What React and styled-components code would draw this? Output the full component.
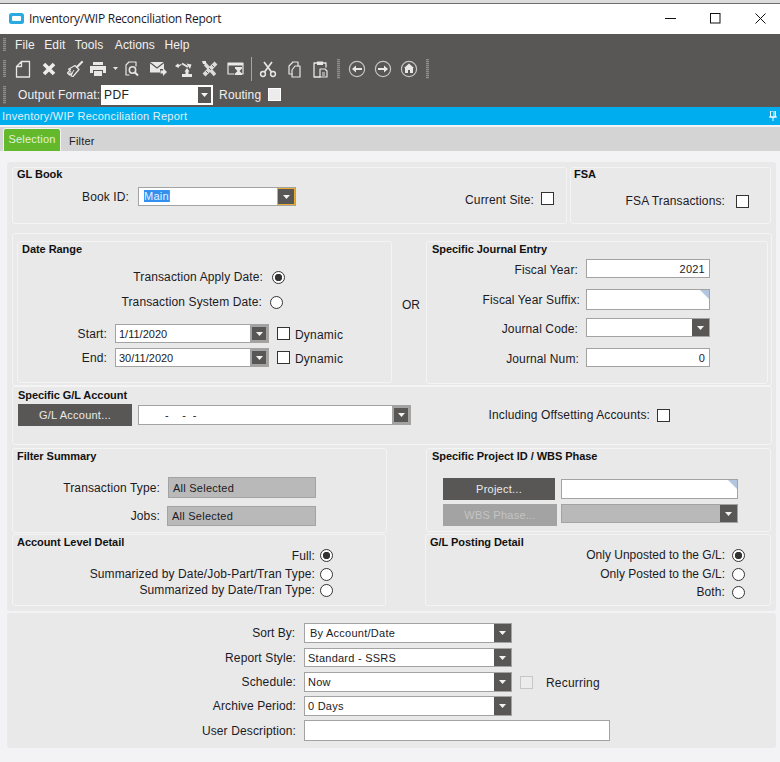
import React from "react";
import styled, { createGlobalStyle } from "styled-components";

const Global = createGlobalStyle`
  html, body { margin: 0; padding: 0; background: #f3f3f5; }
  body { font-family: "Liberation Sans", Arial, sans-serif; font-size: 12px; color: #1c1a24; overflow: hidden; }
  #root { width: 780px; height: 762px; overflow: hidden; }
  * { box-sizing: border-box; }
`;

const Page = styled.div`display: flex; flex-direction: column; width: 780px; height: 762px; background: #f3f3f5;`;

const TitleBar = styled.header`
  height: 34px; display: flex; align-items: center; background: #fff;
  border-top: 3px solid #dcdcdc; box-shadow: inset 0 1px 0 #6e6e6e; padding: 1px 0 1px 9px;
`;
const TitleText = styled.span`
  margin-left: 5px; font: 12px "Open Sans", sans-serif; letter-spacing: -0.26px; color: #1a1a28; flex: 1;
`;
const WinButtons = styled.div`display: flex; align-items: center; gap: 34px; padding-right: 14px;`;

const DarkBar = styled.div`height: 73px; background: #595755; display: flex; flex-direction: column; color: #f0f0f0;`;
const BarRow = styled.div`height: ${p => p.$h}px; display: flex; align-items: center; padding-left: 3px;`;
const Grip = styled.div`
  width: 3px; height: ${p => p.$h || 16}px; flex: none;
  background: repeating-linear-gradient(to bottom, #8f8d8b 0 1px, #6a6866 1px 2px);
`;
const Menu = styled.nav`display: flex; margin-left: 9px; gap: 9.5px;`;
const MenuItem = styled.span`font-size: 12px; letter-spacing: 0.1px; color: #f2f2f2; margin-left: ${p => p.$ml || 0}px;`;
const Tool = styled.div`width: ${p => p.$w || 26}px; flex: none; display: flex; align-items: center; justify-content: center; margin-left: ${p => p.$ml || 0}px;`;
const ToolSep = styled.div`width: 1px; height: 24px; background: #a8a6a4; margin: 0 3px 0 2px; flex: none;`;
const ToolGrip = styled(Grip)`margin: 0 ${p => p.$mr || 0}px 0 ${p => p.$ml || 0}px;`;
const BarLabel = styled.span`color: #f0f0f0; font-size: 12px; margin-left: ${p => p.$ml}px; letter-spacing: 0.1px;`;
const OutCombo = styled.div`
  width: 112px; height: 20px; margin-left: 1px; background: #fff; color: #222; display: flex; align-items: center;
  justify-content: space-between; padding: 0 1px 0 3px; font-size: 12px; letter-spacing: 0.4px;
`;
const OutButton = styled.div`
  width: 15px; height: 18px; background: #595755; border: 1px solid #fff; display: flex; align-items: center; justify-content: center;
`;
const BarCheck = styled.div`width: 13px; height: 13px; margin-left: 7px; background: #ececec; border: 1px solid #fff;`;

const Caption = styled.div`
  height: 18px; background: #00aeef; color: #e6eef2; font-size: 11px; letter-spacing: 0.25px;
  display: flex; align-items: center; justify-content: space-between; padding: 0 3px 0 2px;
`;
const TabStrip = styled.div`
  height: 24px; margin-top: 2px; background: #d4d4d4; display: flex; align-items: flex-end; padding-left: 3px; margin-bottom: 11px;
`;
const ActiveTab = styled.div`
  width: 58px; height: 23px; background: #63b92b; border: 1px solid #f2f2f2; border-bottom: 0; border-radius: 3px 3px 0 0;
  color: #e4f3d8; font-size: 11px; text-align: center; line-height: 20px; letter-spacing: 0.2px;
`;
const Tab = styled.div`margin-left: 8px; font-size: 11px; color: #222; height: 20px; line-height: 20px; letter-spacing: 0.2px;`;

const Panel = styled.section`
  margin-left: 7px; width: 769px; height: ${p => p.$h}px; margin-top: ${p => p.$mt || 0}px;
  background: #e9e9e9; padding: ${p => p.$pt || 0}px 0 0 ${p => p.$pl || 0}px;
  border-radius: 3px; display: flex; flex-direction: column;
`;
const Between = styled.div`display: flex; margin-top: ${p => p.$mt || 0}px; width: ${p => p.$w || 760}px;`;
const Section = styled.div`
  width: ${p => p.$w}px; height: ${p => p.$h}px; flex: none;
  margin-left: ${p => p.$ml || 0}px; margin-top: ${p => p.$mt || 0}px;
  border: 1px solid #f4f4f4; border-radius: 3px;
`;
const Wrap = styled(Section)`display: flex; padding: 7px 0 0 4px; align-items: flex-start;`;
const Title = styled.div`
  font-weight: bold; font-size: 11px; line-height: 13px; color: #111; white-space: nowrap; letter-spacing: -0.05px;
  margin: ${p => p.$mt || 0}px 0 0 ${p => p.$x}px;
`;
const Row = styled.div`
  display: flex; align-items: ${p => p.$align || "center"}; height: ${p => p.$h}px;
  margin-top: ${p => p.$mt || 0}px; padding-left: ${p => p.$pl || 0}px;
`;
const Label = styled.span`
  width: ${p => p.$w}px; flex: none; text-align: right; margin-right: ${p => p.$gap ?? 8}px; white-space: nowrap;
  font-size: 12px; letter-spacing: ${p => p.$ls ?? 0.12}px; position: relative; top: ${p => p.$dy || 0}px;
`;
const Plain = styled.span`
  margin-left: ${p => p.$ml || 0}px; font-size: 12px; letter-spacing: 0.2px; white-space: nowrap; position: relative; top: 1px;
`;
const Or = styled.span`width: 34px; margin: 57px 0 0 0; padding-left: 10px; font-size: 12px; flex: none;`;
const Check = styled.div`
  width: 13px; height: 13px; flex: none; background: ${p => p.$dim ? "#ececec" : "#fff"};
  border: 1px solid ${p => p.$dim ? "#c6c6c6" : "#333"}; margin-left: ${p => p.$ml || 0}px;
  position: relative; top: ${p => p.$dy || 0}px;
`;
const Radio = styled.div`
  width: 13px; height: 13px; flex: none; border-radius: 50%; border: 1px solid #333;
  background: ${p => p.$on ? "radial-gradient(circle, #333 0 3.4px, #fff 4px)" : "#fff"};
`;
const Input = styled.div`
  width: ${p => p.$w}px; height: ${p => p.$h || 19}px; flex: none; background: ${p => p.$bg || "#fff"};
  border: 1px solid ${p => p.$bd || "#a3a3a3"}; font-size: 11px; letter-spacing: ${p => p.$ls ?? 0.25}px; color: #1c1a24;
  display: flex; align-items: center; justify-content: ${p => p.$right ? "flex-end" : "flex-start"};
  padding: 0 ${p => p.$right ? 4 : 0}px 0 ${p => p.$right ? 0 : (p.$pad ?? 4)}px; position: relative; overflow: hidden; white-space: pre;
`;
const Corner = styled.i`
  position: absolute; top: 0; right: 0; width: 0; height: 0;
  border-top: 9px solid #b2c6e0; border-left: 9px solid transparent;
`;
const Combo = styled(Input)`
  border-color: #a3a3a3; padding-right: 0; justify-content: space-between;
`;
const ComboText = styled.span`flex: 1; padding-left: ${p => p.$pad ?? 0}px;`;
const Drop = styled.div`
  width: ${p => p.$w || 17}px; align-self: stretch; flex: none; background: #595755; display: flex; align-items: center; justify-content: center;
  border: ${p => p.$thick ? "2px solid #a3a3a3" : p.$focus ? "1px solid #e5ad32" : "0"};
  border-right-width: ${p => p.$thick ? 2 : p.$focus ? 1 : 0}px;
`;
const Sel = styled.span`background: #3390ef; color: #e8f2ff; border-right: 1px solid #f07a10; line-height: 13px;`;
const DarkButton = styled.div`
  width: ${p => p.$w}px; height: 22px; flex: none; background: ${p => p.$off ? "#a3a3a3" : "#595755"};
  color: ${p => p.$off ? "#c4c4c4" : "#eaeaea"}; font-size: 11px; letter-spacing: 0.25px; display: flex; align-items: center; justify-content: center;
  margin-right: ${p => p.$mr}px;
`;

const Tri = ({ s = 7 }) => (
  <svg width={s} height={4} viewBox="0 0 7 4"><path d="M0 0h7L3.5 4z" fill="#f4f4f4" /></svg>
);

const C = { fill: "none", stroke: "#e6e6e6", strokeWidth: 1.5, strokeLinejoin: "round", strokeLinecap: "round" };
const Ico = ({ children, w = 18, h = 18 }) => (
  <svg width={w} height={h} viewBox={`0 0 ${w} ${h}`}>{children}</svg>
);

const icons = {
  file: <Ico><path {...C} d="M7.5 1.5H15.5V17H2.5V6.5z M7.5 1.5V6.5H2.5" strokeWidth="1.3" /></Ico>,
  x: <Ico><path d="M4 4l10 10M14 4L4 14" stroke="#ececec" strokeWidth="3.6" /></Ico>,
  broom: <Ico w={20}><path d="M12 7l5-5" stroke="#e6e6e6" strokeWidth="2.2" strokeLinecap="round" /><path {...C} strokeWidth="1.2" d="M10 5.5l4 4-6 7-2-.5 1-3-2.5 2-2-2 3-3.5-2-.3z" /><path stroke="#e6e6e6" strokeWidth="1" d="M6 11l-2 3M9 10l-2.5 4" /></Ico>,
  print: <Ico><path fill="#e8e8e8" d="M4 2h10v3H4zM1 6h16v7h-3v-3H4v3H1zM5 11h8v5H5z" /></Ico>,
  preview: <Ico w={16}><path {...C} strokeWidth="1.2" d="M6 2h7v4M3 5l3-3M3 5v10h3" /><circle cx="9.5" cy="10" r="3.2" {...C} strokeWidth="1.5" /><path stroke="#e8e8e8" strokeWidth="2" d="M12 12.5l3 3" /></Ico>,
  mail: <Ico><path fill="#e8e8e8" d="M1 2h14v7h-4v3.5H1z" /><path fill="none" stroke="#595755" strokeWidth="1.2" d="M1 2.5l7 5.5 7-5.5" /><path fill="#e8e8e8" d="M11.5 10.5h2.5V8l4 4-4 4v-2.5h-2.5z" /></Ico>,
  arrows: <Ico><path fill="#e8e8e8" d="M0 6l3-2.5 1 1.5 2-1 .5 1L4 6.5l-.5 1.5z" /><path stroke="#e8e8e8" strokeWidth="2" d="M7 3.5l6 3.5" /><path fill="#e8e8e8" d="M11.5 3.5l5 1-1.5 4.5z" /><path fill="#e8e8e8" d="M12 8l2.5 3.5H13.500V14H17V17H7V14H10.500V11.500H9.500z" /></Ico>,
  tools: <Ico><path stroke="#dcdcdc" strokeWidth="4" d="M3 15L15 3" /><path stroke="#dcdcdc" strokeWidth="3.4" d="M4 4l10 11" /><path stroke="#595755" strokeWidth=".9" d="M5 11l2 2M8 8l2 2M11 5l2 2" /><path fill="#e8e8e8" d="M1 1h4v3H2z" /></Ico>,
  hour: <Ico><path {...C} strokeWidth="1.2" d="M1 3h15v11h-4M1 3v11h6" /><path fill="#e8e8e8" d="M1 3h15v2.5H1zM8 7h7v1.5l-2.5 2.5 2.5 2.5V15H8v-1.5l2.5-2.5L8 8.5z" /></Ico>,
  cut: <Ico><circle cx="4" cy="14" r="2.4" {...C} /><circle cx="14" cy="14" r="2.4" {...C} /><path stroke="#e6e6e6" strokeWidth="1.7" d="M5.5 12L13 2M12.5 12L5 2" /></Ico>,
  copy: <Ico w={16}><path {...C} strokeWidth="1.2" d="M7 2h5v4M7 2L3 6v8h3" /><path {...C} strokeWidth="1.2" d="M9 6h5v11H6v-7z" /></Ico>,
  paste: <Ico w={16}><path {...C} strokeWidth="1.3" d="M5 3H2v14h6M11 3h3v4" /><path fill="#e6e6e6" d="M5 1.5h6V5H5z" /><path {...C} strokeWidth="1.2" d="M8 9h5l2 2v6H8z" /><path stroke="#e6e6e6" d="M10 13h3M10 15h3" /></Ico>,
  back: <Ico><circle cx="9" cy="9" r="7.6" {...C} stroke="#c4c4c4" strokeWidth="1.2" /><path fill="#e8e8e8" d="M4 9l4-3.6V8h6v2H8v2.6z" /></Ico>,
  fwd: <Ico><circle cx="9" cy="9" r="7.6" {...C} stroke="#c4c4c4" strokeWidth="1.2" /><path fill="#e8e8e8" d="M14 9l-4-3.6V8H4v2h6v2.6z" /></Ico>,
  home: <Ico><circle cx="9" cy="9" r="7.6" {...C} stroke="#c4c4c4" strokeWidth="1.2" /><path fill="#e8e8e8" d="M9 3.5l5 4.5h-1v5H10v-3H8v3H5V8H4z" /></Ico>,
};

const Tools = () => (
  <BarRow $h={27}>
    <Grip $h={17} />
    <Tool $ml={4}>{icons.file}</Tool>
    <Tool>{icons.x}</Tool>
    <Tool>{icons.broom}</Tool>
    <Tool $w={30}>
      {icons.print}
      <svg width="5" height="3" viewBox="0 0 5 3" style={{ marginLeft: 6 }}><path d="M0 0h5L2.5 3z" fill="#e8e8e8" /></svg>
    </Tool>
    <Tool>{icons.preview}</Tool>
    <Tool $ml={1}>{icons.mail}</Tool>
    <Tool>{icons.arrows}</Tool>
    <Tool>{icons.tools}</Tool>
    <Tool>{icons.hour}</Tool>
    <ToolSep />
    <Tool>{icons.cut}</Tool>
    <Tool>{icons.copy}</Tool>
    <Tool>{icons.paste}</Tool>
    <ToolGrip $h={20} $ml={4} $mr={4} />
    <Tool>{icons.back}</Tool>
    <Tool>{icons.fwd}</Tool>
    <Tool>{icons.home}</Tool>
    <ToolGrip $h={20} $ml={4} />
  </BarRow>
);

const Sel3 = ({ w, h, text, pad, thick, focus, dw, ls, children }) => (
  <Combo $w={w} $h={h} $pad={0} $ls={ls}>
    <ComboText $pad={pad}>{children || text}</ComboText>
    <Drop $thick={thick} $focus={focus} $w={dw}><Tri /></Drop>
  </Combo>
);

export default function App() {
  return (
    <Page>
      <Global />
      <TitleBar>
        <svg width="15" height="11" viewBox="0 0 15 11"><rect width="15" height="11" rx="2.5" fill="#29abe2" /><rect x="3" y="3" width="9" height="5" rx="1" fill="#fff" /></svg>
        <TitleText>Inventory/WIP Reconciliation Report</TitleText>
        <WinButtons>
          <svg width="11" height="11" viewBox="0 0 11 11"><path d="M0 5.5h11" stroke="#111" /></svg>
          <svg width="11" height="11" viewBox="0 0 11 11"><rect x=".5" y=".5" width="9.5" height="9.5" fill="none" stroke="#111" /></svg>
          <svg width="11" height="11" viewBox="0 0 11 11"><path d="M.5.5l10 10M10.5.5l-10 10" stroke="#111" /></svg>
        </WinButtons>
      </TitleBar>

      <DarkBar>
        <BarRow $h={21}>
          <Grip $h={13} />
          <Menu>
            <MenuItem>File</MenuItem>
            <MenuItem>Edit</MenuItem>
            <MenuItem>Tools</MenuItem>
            <MenuItem $ml={2}>Actions</MenuItem>
            <MenuItem>Help</MenuItem>
          </Menu>
        </BarRow>
        <Tools />
        <BarRow $h={25}>
          <Grip $h={18} />
          <BarLabel $ml={12}>Output Format:</BarLabel>
          <OutCombo>PDF<OutButton><Tri /></OutButton></OutCombo>
          <BarLabel $ml={6}>Routing</BarLabel>
          <BarCheck />
        </BarRow>
      </DarkBar>

      <Caption>
        Inventory/WIP Reconciliation Report
        <svg width="8" height="10" viewBox="0 0 8 10"><path d="M1.5 0h5v6h-5zM0 6h8M4 6v4M5 1v4" stroke="#fff" fill="none" /></svg>
      </Caption>

      <TabStrip>
        <ActiveTab>Selection</ActiveTab>
        <Tab>Filter</Tab>
      </TabStrip>

      <Panel $h={449} $pt={5} $pl={5}>
        <Between>
          <Section $w={555} $h={57}>
            <Title $x={4}>GL Book</Title>
            <Row $h={19} $mt={6}>
              <Label $w={116} $gap={9}>Book ID:</Label>
              <Sel3 w={158} h={19} pad={5} focus dw={18}><Sel>Main</Sel></Sel3>
              <Label $w={238} $gap={7} $dy={3}>Current Site:</Label>
              <Check $dy={2} />
            </Row>
          </Section>
          <Section $w={201} $h={57} $ml={3}>
            <Title $x={3}>FSA</Title>
            <Row $h={14} $mt={13}>
              <Label $w={154} $gap={11}>FSA Transactions:</Label>
              <Check />
            </Row>
          </Section>
        </Between>

        <Wrap $w={760} $h={153} $mt={9}>
          <Section $w={375} $h={142}>
            <Title $x={4} $mt={1}>Date Range</Title>
            <Row $h={14} $mt={14}><Label $w={245} $gap={9}>Transaction Apply Date:</Label><Radio $on /></Row>
            <Row $h={14} $mt={11}><Label $w={244} $gap={8}>Transaction System Date:</Label><Radio /></Row>
            <Row $h={19} $mt={15}>
              <Label $w={89}>Start:</Label>
              <Sel3 w={154} h={19} pad={3} ls={0} text="1/11/2020" thick dw={18} />
              <Check $ml={8} /><Plain $ml={5}>Dynamic</Plain>
            </Row>
            <Row $h={19} $mt={5}>
              <Label $w={89}>End:</Label>
              <Sel3 w={154} h={19} pad={3} ls={0} text="30/11/2020" thick dw={18} />
              <Check $ml={8} /><Plain $ml={5}>Dynamic</Plain>
            </Row>
          </Section>
          <Or>OR</Or>
          <Section $w={342} $h={143}>
            <Title $x={5} $mt={1}>Specific Journal Entry</Title>
            <Row $h={19} $mt={3}><Label $w={151} $dy={1}>Fiscal Year:</Label><Input $w={124} $right>2021</Input></Row>
            <Row $h={21} $mt={11}><Label $w={153} $gap={6}>Fiscal Year Suffix:</Label><Input $w={124} $h={21}><Corner /></Input></Row>
            <Row $h={19} $mt={8}><Label $w={151} $dy={1}>Journal Code:</Label><Sel3 w={124} h={19} dw={17} /></Row>
            <Row $h={19} $mt={11}><Label $w={152} $gap={7} $dy={1}>Journal Num:</Label><Input $w={124} $right>0</Input></Row>
          </Section>
        </Wrap>

        <Section $w={760} $h={59}>
          <Title $x={5} $mt={2}>Specific G/L Account</Title>
          <Row $h={22} $mt={2} $pl={5}>
            <DarkButton $w={114} $mr={6}>G/L Account...</DarkButton>
            <Sel3 w={273} h={20} text="-    -  -" pad={26} thick dw={18} />
            <Label $w={239} $gap={7}>Including Offsetting Accounts:</Label>
            <Check />
          </Row>
        </Section>

        <Between $mt={3}>
          <Section $w={375} $h={85}>
            <Title $x={4} $mt={1}>Filter Summary</Title>
            <Row $h={21} $mt={14}><Label $w={147}>Transaction Type:</Label><Input $w={148} $h={21} $bg="#b9b9b9" $pad={4}>All Selected</Input></Row>
            <Row $h={20} $mt={8}><Label $w={147} $gap={7}>Jobs:</Label><Input $w={149} $h={20} $bg="#b9b9b9" $pad={4}>All Selected</Input></Row>
          </Section>
          <Section $w={345} $h={84} $ml={39}>
            <Title $x={5} $mt={1}>Specific Project ID / WBS Phase</Title>
            <Row $h={22} $mt={15} $pl={16}>
              <DarkButton $w={112} $mr={6}>Project...</DarkButton>
              <Input $w={177} $h={20}><Corner /></Input>
            </Row>
            <Row $h={22} $mt={4} $pl={16} $align="flex-start">
              <DarkButton $w={114} $mr={4} $off>WBS Phase...</DarkButton>
              <Combo $w={177} $h={19} $bg="#b9b9b9" $pad={0}><ComboText /><Drop><Tri /></Drop></Combo>
            </Row>
          </Section>
        </Between>

        <Between $mt={1}>
          <Section $w={374} $h={72}>
            <Title $x={4} $mt={1}>Account Level Detail</Title>
            <Row $h={14} $mt={-1}><Label $w={302} $gap={5} $dy={1}>Full:</Label><Radio $on /></Row>
            <Row $h={14} $mt={5}><Label $w={302} $gap={5}>Summarized by Date/Job-Part/Tran Type:</Label><Radio /></Row>
            <Row $h={14} $mt={2}><Label $w={302} $gap={5}>Summarized by Date/Tran Type:</Label><Radio /></Row>
          </Section>
          <Section $w={346} $h={72} $ml={39}>
            <Title $x={4} $mt={1}>G/L Posting Detail</Title>
            <Row $h={14} $mt={-1}><Label $w={299} $gap={7} $ls={0}>Only Unposted to the G/L:</Label><Radio $on /></Row>
            <Row $h={14} $mt={5}><Label $w={299} $gap={7} $ls={0}>Only Posted to the G/L:</Label><Radio /></Row>
            <Row $h={14} $mt={4}><Label $w={299} $gap={7}>Both:</Label><Radio /></Row>
          </Section>
        </Between>
      </Panel>

      <Panel $h={135} $mt={2} $pt={10}>
        <Row $h={20}><Label $w={288} $gap={9} $ls={0}>Sort By:</Label><Sel3 w={208} h={20} pad={5} text="By Account/Date" /></Row>
        <Row $h={19} $mt={5}><Label $w={289}>Report Style:</Label><Sel3 w={208} h={19} pad={3} text="Standard - SSRS" /></Row>
        <Row $h={20} $mt={5}>
          <Label $w={289}>Schedule:</Label><Sel3 w={208} h={20} pad={3} text="Now" />
          <Check $dim $ml={8} /><Plain $ml={13}>Recurring</Plain>
        </Row>
        <Row $h={20} $mt={4}><Label $w={289}>Archive Period:</Label><Sel3 w={208} h={20} pad={3} text="0 Days" /></Row>
        <Row $h={21} $mt={4}><Label $w={289}>User Description:</Label><Input $w={306} $h={21} /></Row>
      </Panel>
    </Page>
  );
}
